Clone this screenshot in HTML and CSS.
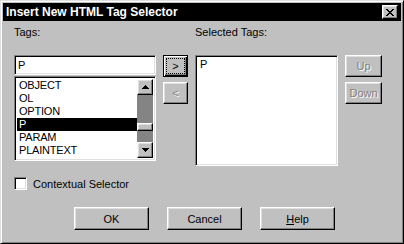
FILE: index.html
```html
<!DOCTYPE html>
<html lang="en">

<head>
    <meta charset="UTF-8">
    <meta name="viewport" content="width=device-width, initial-scale=1.0">
    <title>Insert New HTML Tag Selector</title>
    <link rel="stylesheet" href="styles.css">
</head>

<body>
    <div class="dialog">
        <div class="titlebar">
            <span class="title">Insert New HTML Tag Selector</span>
            <span class="close-btn">
                <svg width="8" height="7" viewBox="0 0 8 7" shape-rendering="crispEdges">
                    <path d="M0 0h2v1H0z M6 0h2v1H6z M1 1h2v1H1z M5 1h2v1H5z M2 2h4v1H2z M3 3h2v1H3z M2 4h4v1H2z M1 5h2v1H1z M5 5h2v1H5z M0 6h2v1H0z M6 6h2v1H6z" fill="#000"/>
                </svg>
            </span>
        </div>

        <div class="content">
            <div class="picker">
                <div class="label">Tags:</div>
                <div></div>
                <div class="label">Selected Tags:</div>
                <div></div>

                <div class="tags-col">
                    <div class="field">P</div>
                    <div class="listbox tag-list">
                        <ul class="items">
                            <li>OBJECT</li>
                            <li>OL</li>
                            <li>OPTION</li>
                            <li class="selected">P</li>
                            <li>PARAM</li>
                            <li>PLAINTEXT</li>
                            <li>PRE</li>
                        </ul>
                        <div class="scrollbar">
                            <span class="btn scroll-btn">
                                <svg width="7" height="4" viewBox="0 0 7 4" shape-rendering="crispEdges"><path d="M3 0h1v1h1v1h1v1h1v1H0V3h1V2h1V1h1z" fill="#000"/></svg>
                            </span>
                            <div class="track">
                                <span class="btn thumb"></span>
                            </div>
                            <span class="btn scroll-btn">
                                <svg width="7" height="4" viewBox="0 0 7 4" shape-rendering="crispEdges"><path d="M0 0h7v1H6v1H5v1H4v1H3V3H2V2H1V1H0z" fill="#000"/></svg>
                            </span>
                        </div>
                    </div>
                </div>

                <div class="side-buttons">
                    <span class="btn small default"><span class="focus">&gt;</span></span>
                    <span class="btn small disabled">&lt;</span>
                </div>

                <div class="listbox selected-list">
                    <ul class="items">
                        <li>P</li>
                    </ul>
                </div>

                <div class="side-buttons">
                    <span class="btn small disabled">Up</span>
                    <span class="btn small disabled">Down</span>
                </div>
            </div>

            <div class="check">
                <span class="check-box"></span>
                <span>Contextual Selector</span>
            </div>

            <div class="actions">
                <span class="btn action">OK</span>
                <span class="btn action">Cancel</span>
                <span class="btn action"><u>H</u>elp</span>
            </div>
        </div>
    </div>
</body>

</html>
```

FILE: styles.css
```css
body {
    margin: 0;
    background: #c0c0c0;
    font-family: "Liberation Sans", Arial, sans-serif;
    font-size: 11px;
    color: #000;
}

.dialog {
    width: 404px;
    height: 244px;
    box-sizing: border-box;
    background: #c0c0c0;
    border: 1px solid;
    border-color: #dfdfdf #000 #000 #dfdfdf;
    box-shadow: inset 1px 1px #fff, inset -1px -1px #808080;
    padding: 2px;
}

.titlebar {
    height: 18px;
    background: #000;
    color: #fff;
    display: flex;
    align-items: center;
    justify-content: space-between;
    padding: 0 3px 0 3px;
}

.title {
    font-weight: bold;
    font-size: 12px;
}

.close-btn {
    width: 16px;
    height: 14px;
    box-sizing: border-box;
    background: #c0c0c0;
    border: 1px solid;
    border-color: #fff #000 #000 #fff;
    box-shadow: inset -1px -1px #808080, inset 1px 1px #dfdfdf;
    display: flex;
    align-items: center;
    justify-content: center;
}

.content {
    padding: 5px 0 0 11px;
}

.picker {
    display: grid;
    grid-template-columns: 142px 25px 143px 37px;
    column-gap: 7px;
}

.label {
    line-height: 13px;
    margin-bottom: 16px;
}

/* raised 3d button */
.btn {
    box-sizing: border-box;
    background: #c0c0c0;
    border: 1px solid;
    border-color: #fff #000 #000 #fff;
    box-shadow: inset -1px -1px #808080, inset 1px 1px #dfdfdf;
    display: flex;
    align-items: center;
    justify-content: center;
}

.tags-col {
    display: flex;
    flex-direction: column;
    gap: 1px;
}

.field,
.listbox,
.check-box {
    box-sizing: border-box;
    background: #fff;
    border: 1px solid;
    border-color: #808080 #fff #fff #808080;
    box-shadow: inset 1px 1px #000, inset -1px -1px #dfdfdf;
}

.field {
    height: 20px;
    line-height: 16px;
    padding: 1px 3px;
}

.listbox {
    padding: 2px;
    overflow: hidden;
}

.tag-list {
    height: 85px;
    display: flex;
}

.selected-list {
    height: 111px;
}

.items {
    list-style: none;
    margin: 0;
    padding: 0;
    flex: 1;
    overflow: hidden;
}

.items li {
    height: 13px;
    line-height: 13px;
    padding-left: 2px;
    letter-spacing: -0.2px;
}

.items li.selected {
    background: #000;
    color: #fff;
}

.scrollbar {
    width: 16px;
    display: flex;
    flex-direction: column;
}

.scroll-btn {
    height: 16px;
    flex: none;
}

.track {
    flex: 1;
    background: #848484;
    padding-top: 28px;
}

.thumb {
    height: 8px;
}

.side-buttons {
    display: flex;
    flex-direction: column;
    gap: 5px;
}

.small {
    height: 22px;
}

.default {
    border: 1px solid #000;
    box-shadow: inset 1px 1px #fff, inset -1px -1px #000, inset -2px -2px #808080;
    padding: 3px;
}

.focus {
    flex: 1;
    align-self: stretch;
    outline: 1px dotted #000;
    display: flex;
    align-items: center;
    justify-content: center;
}

.disabled {
    color: #808080;
    text-shadow: 1px 1px #fff;
}

.check {
    display: flex;
    align-items: center;
    gap: 6px;
    margin-top: 11px;
    height: 13px;
}

.check-box {
    width: 13px;
    height: 13px;
}

.actions {
    display: flex;
    gap: 18px;
    margin-top: 17px;
    padding-left: 60px;
}

.action {
    width: 75px;
    height: 23px;
}
```
